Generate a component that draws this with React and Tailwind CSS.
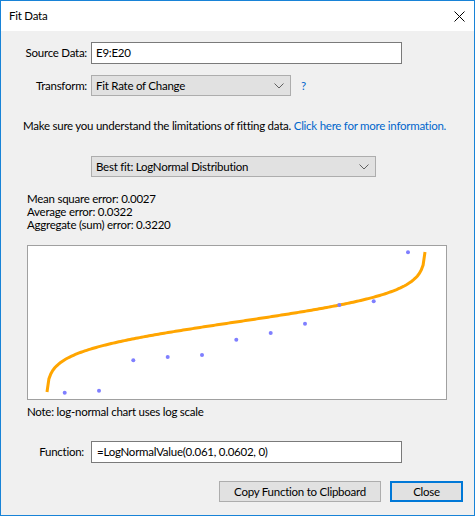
import React from 'react'

// inverse normal cdf (Acklam approximation)
function invNorm(p) {
  const a = [-39.69683028665376, 220.9460984245205, -275.9285104469687, 138.357751867269, -30.66479806614716, 2.506628277459239]
  const b = [-54.47609879822406, 161.5858368580409, -155.6989798598866, 66.80131188771972, -13.28068155288572]
  const c = [-0.007784894002430293, -0.3223964580411365, -2.400758277161838, -2.549732539343734, 4.374664141464968, 2.938163982698783]
  const d = [0.007784695709041462, 0.3224671290700398, 2.445134137142996, 3.754408661907416]
  const pl = 0.02425
  if (p < pl) {
    const q = Math.sqrt(-2 * Math.log(p))
    return (((((c[0] * q + c[1]) * q + c[2]) * q + c[3]) * q + c[4]) * q + c[5]) / ((((d[0] * q + d[1]) * q + d[2]) * q + d[3]) * q + 1)
  }
  if (p > 1 - pl) return -invNorm(1 - p)
  const q = p - 0.5
  const r = q * q
  return (((((a[0] * r + a[1]) * r + a[2]) * r + a[3]) * r + a[4]) * r + a[5]) * q / (((((b[0] * r + b[1]) * r + b[2]) * r + b[3]) * r + b[4]) * r + 1)
}

// chart coords are relative to the inner box (page x - 28, y - 247)
const p0 = 0.001
const z0 = -invNorm(p0)
const curve = Array.from({ length: 201 }, (_, i) => {
  const t = i / 200
  const p = p0 + t * (1 - 2 * p0)
  const x = 19 + t * 378
  const y = 76 - (70 / z0) * invNorm(p)
  return `${i ? 'L' : 'M'}${x.toFixed(2)} ${y.toFixed(2)}`
}).join(' ')

const points = [
  [64.7, 393.7], [99, 391.7], [133.3, 361.3], [167.7, 358], [202, 356], [236.3, 340.7],
  [270.7, 334], [305, 324.7], [339.3, 306], [373.7, 302.3], [408, 253.3],
]

function Chevron() {
  return (
    <svg width="10" height="6" viewBox="0 0 10 6" className="shrink-0">
      <path d="M0.5 0.5 L5 5 L9.5 0.5" fill="none" stroke="#606060" strokeWidth="1" />
    </svg>
  )
}

function Combo({ value, className }) {
  return (
    <div className={`flex items-center justify-between pl-[4px] pr-[6px] bg-[#e1e1e1] border border-[#adadad] ${className}`}>
      <span>{value}</span>
      <Chevron />
    </div>
  )
}

export default function App() {
  return (
    <div className="w-[475px] h-[516px] border border-[#1883d7] bg-[#f0f0f0] flex flex-col text-[11.5px] tracking-[-0.25px] text-black font-['Lato',sans-serif] leading-[16px] overflow-hidden">
      <div className="h-[30px] bg-white flex items-center justify-between pl-[8px] pr-[9px] shrink-0">
        <span>Fit Data</span>
        <svg width="11" height="11" viewBox="0 0 11 11">
          <path d="M0.5 0.5 L10.5 10.5 M10.5 0.5 L0.5 10.5" stroke="#000" strokeWidth="1" />
        </svg>
      </div>

      <div className="flex items-center mt-[11px]">
        <span className="w-[86px] text-right">Source Data:</span>
        <div className="ml-[4px] w-[311px] h-[22px] bg-white border border-[#7a7a7a] flex items-center px-[4px]">E9:E20</div>
      </div>

      <div className="flex items-center mt-[11px]">
        <span className="w-[86px] text-right">Transform:</span>
        <Combo value="Fit Rate of Change" className="ml-[4px] w-[200px] h-[21px]" />
        <span className="ml-[10px] text-[#0066cc]">?</span>
      </div>

      <p className="mt-[22px] ml-[22px] whitespace-nowrap">
        Make sure you understand the limitations of fitting data.{' '}
        <span className="text-[#0066cc]">Click here for more information.</span>
      </p>

      <Combo value="Best fit: LogNormal Distribution" className="mt-[22px] ml-[90px] w-[285px] h-[21px]" />

      <div className="mt-[15px] ml-[26px] leading-[13px]">
        <div>Mean square error: 0.0027</div>
        <div>Average error: 0.0322</div>
        <div>Aggregate (sum) error: 0.3220</div>
      </div>

      <div className="mt-[14px] ml-[26px] w-[420px] h-[155px] bg-white border border-[#a0a0a0] shrink-0">
        <svg width="418" height="153" viewBox="0 0 418 153">
          <path d={curve} fill="none" stroke="#ffa500" strokeWidth="3" />
          {points.map(([x, y], i) => (
            <circle key={i} cx={x - 28} cy={y - 247} r="2" fill="#7f7fff" />
          ))}
        </svg>
      </div>

      <p className="mt-[4px] ml-[26px]">Note: log-normal chart uses log scale</p>

      <div className="flex items-center mt-[21px]">
        <span className="w-[83px] text-right">Function:</span>
        <div className="ml-[7px] w-[311px] h-[22px] bg-white border border-[#7a7a7a] flex items-center px-[5px]">=LogNormalValue(0.061, 0.0602, 0)</div>
      </div>

      <div className="flex justify-end gap-[9px] mt-[18px] pr-[11px]">
        <button className="w-[162px] h-[21px] bg-[#e1e1e1] border border-[#adadad] leading-[16px]">Copy Function to Clipboard</button>
        <button className="w-[73px] h-[21px] bg-[#e1e1e1] border-2 border-[#0078d7] leading-[16px]">Close</button>
      </div>
    </div>
  )
}
